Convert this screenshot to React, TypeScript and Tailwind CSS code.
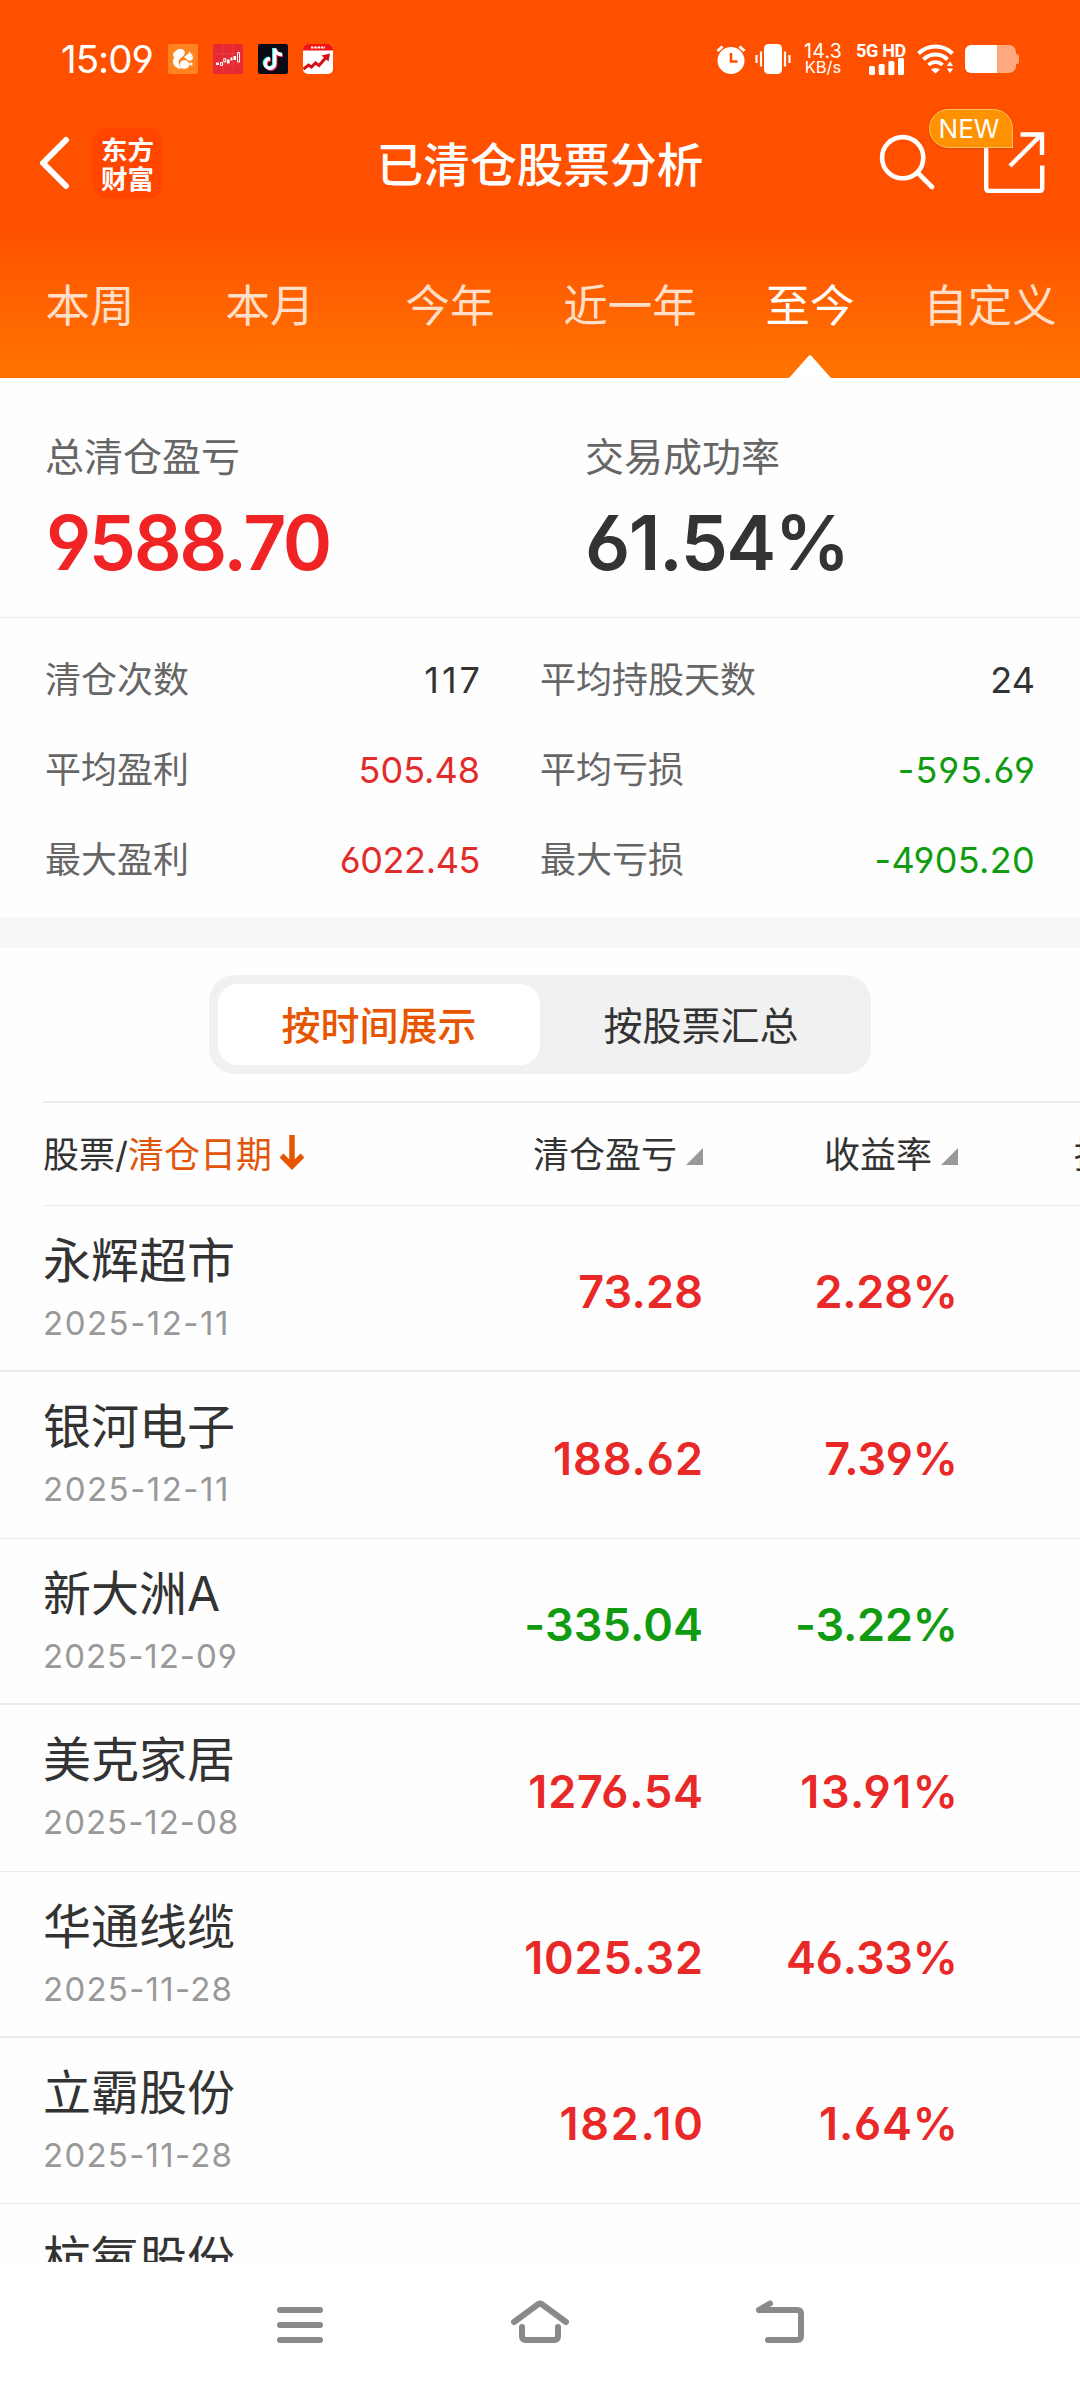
import { ReactNode } from "react";

interface Trade {
  name: string;
  date: string;
  profit: string;
  rate: string;
}

const tabs = ["本周", "本月", "今年", "近一年", "至今", "自定义"];
const activeTab = "至今";

const stats = [
  { label: "清仓次数", value: "117", style: "text-[#333] tracking-[3px] -mr-[3px]" },
  { label: "平均持股天数", value: "24", style: "text-[#333]" },
  { label: "平均盈利", value: "505.48", style: "text-[#e32b2b]" },
  { label: "平均亏损", value: "-595.69", style: "text-[#109b10] tracking-[1px] -mr-px" },
  { label: "最大盈利", value: "6022.45", style: "text-[#e32b2b] tracking-[-0.400px]" },
  { label: "最大亏损", value: "-4905.20", style: "text-[#109b10] tracking-[0.300px]" },
];

const trades: Trade[] = [
  { name: "永辉超市", date: "2025-12-11", profit: "73.28", rate: "2.28%" },
  { name: "银河电子", date: "2025-12-11", profit: "188.62", rate: "7.39%" },
  { name: "新大洲A", date: "2025-12-09", profit: "-335.04", rate: "-3.22%" },
  { name: "美克家居", date: "2025-12-08", profit: "1276.54", rate: "13.91%" },
  { name: "华通线缆", date: "2025-11-28", profit: "1025.32", rate: "46.33%" },
  { name: "立霸股份", date: "2025-11-28", profit: "182.10", rate: "1.64%" },
  { name: "杭氧股份", date: "", profit: "", rate: "" },
];

// The digit 1 is narrow in Inter, so spread strings that contain it
function spacing(text: string, base: number, perOne: number) {
  if (!text) return undefined;
  const ones = text.split("1").length - 1;
  const value = (base + perOne * ones) / text.length;
  return { letterSpacing: value, marginRight: -value };
}

function AppIcons() {
  return (
    <div className="flex gap-[15px] ml-[15px]">
      {/* UC */}
      <svg width="30" height="30" viewBox="0 0 30 30">
        <rect width="30" height="30" rx="2" fill="#ff8420" />
        <path
          d="M13.500 25C8 24.500 4.500 21 5 16.500c.3-2 1.500-3 1.500-3C4 12 5 8 8 7c1.500-2.500 6-2.500 8-.5 2 2.500 0 5-2 6.500-3 2-4 4-3 7 .4 2 1.500 3.500 2.500 5z"
          fill="#fff"
        />
        <path d="M16 13l4.500-3.500.5-2.500 2 2.500c1.500 1.500 2 3 2 5l-2.500 2.500-3-1z" fill="#fff" />
        <ellipse cx="16.500" cy="20.500" rx="4.800" ry="4.300" fill="#fff" />
        <circle cx="23" cy="20" r="1.600" fill="#fff" />
      </svg>
      {/* K-line app */}
      <svg width="30" height="30" viewBox="0 0 30 30">
        <rect width="30" height="30" rx="2" fill="#e62a33" />
        <path d="M0 10h30M0 20h30M10 0v30M20 0v30" stroke="#ee5a5f" strokeWidth="0.600" opacity="0.600" />
        <path d="M3 18.500h3v2.500H3zM14 15.500h2.500v4H14zM17.500 13.500h2v3h-2zM20.500 12h2.500v4h-2.500z" fill="#fff" />
        <path d="M7.500 18.500h2v3h-2zM10.800 14.500h2v3.500h-2zM24.500 8.500h2v9.500h-2z" fill="none" stroke="#fff" />
      </svg>
      {/* TikTok */}
      <svg width="30" height="30" viewBox="0 0 30 30">
        <rect width="30" height="30" rx="2" fill="#0b0b17" />
        <g fill="none" strokeWidth="3.400">
          <path d="M15.700 4v15a4.700 4.700 0 1 1-4.700-4.700M15.700 4c.5 3.500 3 6 7 6" stroke="#25f4ee" />
          <path d="M17.700 5.500v15a4.700 4.700 0 1 1-4.700-4.700M17.700 5.500c.5 3.500 3 6 7 6" stroke="#fe2c55" />
          <path d="M16.700 4.500v15a4.700 4.700 0 1 1-4.700-4.700M16.700 4.500c.5 3.500 3 6 7.500 6" stroke="#fff" />
        </g>
      </svg>
      {/* stock calendar */}
      <svg width="30" height="30" viewBox="0 0 30 30">
        <rect width="30" height="30" rx="5" fill="#fff" />
        <path d="M0 6.500V5a5 5 0 0 1 5-5h20a5 5 0 0 1 5 5v1.500z" fill="#f01414" />
        <path d="M8 3.500h14" stroke="#fff" strokeWidth="2" strokeDasharray="2.500 0.800" />
        <path d="M0.500 25l5-4 3 2 4-4 3.500 2.500 7-8" fill="none" stroke="#d40f17" strokeWidth="3" />
        <path d="M18.500 11.500L27 9.500l-1.500 8z" fill="#d40f17" />
      </svg>
    </div>
  );
}

function StatusBar() {
  return (
    <div className="flex items-center h-[118px] pl-[61px] pr-[61px] text-white">
      <span className="w-[92px] text-[38.500px] leading-none tracking-[-1px] whitespace-nowrap">15:09</span>
      <AppIcons />
      <div className="flex-1" />
      <svg width="30" height="30" viewBox="0 0 30 30">
        <path d="M1.500 7l5-4.500M28.500 7l-5-4.500" stroke="#fff" strokeWidth="3" />
        <circle cx="15" cy="16.500" r="13.500" fill="#fff" />
        <path d="M15 9v8.500h6.500" fill="none" stroke="#ff5000" strokeWidth="2.600" />
      </svg>
      <svg width="36" height="30" viewBox="0 0 36 30" className="ml-[9px]">
        <rect x="9" width="18" height="30" rx="4.500" fill="#fff" />
        <path d="M6 7.500v15M30 7.500v15M1.500 11v8M34.500 11v8" stroke="#fff" strokeWidth="2.200" />
      </svg>
      <div className="w-[38px] ml-[13px] text-center whitespace-nowrap">
        <div className="text-[19.500px] leading-[17px] tracking-[0.300px]">14.3</div>
        <div className="text-[16.500px] leading-[15px]">KB/s</div>
      </div>
      <div className="w-[50px] ml-[14px] flex flex-col items-end">
        <span className="font-[Roboto] text-[18px] leading-[15px] font-bold tracking-[-0.300px] whitespace-nowrap">5G HD</span>
        <svg width="36" height="17" viewBox="0 0 36 17" fill="#fff" className="mr-px">
          <rect x="0" y="8" width="6" height="9" rx="1.500" />
          <rect x="9.700" y="6" width="6" height="11" rx="1.500" />
          <rect x="19.400" y="3" width="6" height="14" rx="1.500" />
          <rect x="29" y="0" width="6" height="17" rx="1.500" />
        </svg>
      </div>
      <svg width="37" height="30" viewBox="0 0 37 30" className="ml-[11px]" fill="none" stroke="#fff" strokeWidth="4">
        <path d="M1.500 9.500a24 24 0 0 1 34 0" />
        <path d="M6.500 15.500a17 17 0 0 1 24 0" />
        <path d="M11.500 21a10 10 0 0 1 14 0" strokeWidth="3.600" />
        <path d="M14 25.500q4.500-3 9 0L18.500 29.500z" fill="#fff" stroke="none" />
        <path d="M29 22.500h8l-4-6zM29 24h8l-4 6z" fill="#fff" stroke="#ff5000" strokeWidth="1" />
      </svg>
      <svg width="54" height="28" viewBox="0 0 54 28" className="ml-[11px] -mr-[50px] shrink-0">
        <path d="M32 0h12a7 7 0 0 1 7 7v2h1a2 2 0 0 1 2 2v6a2 2 0 0 1-2 2h-1v2a7 7 0 0 1-7 7H32z" fill="#ffa880" />
        <path d="M32 0H6a6 6 0 0 0-6 6v16a6 6 0 0 0 6 6h26z" fill="#fff" />
      </svg>
      <div className="w-[50px]" />
    </div>
  );
}

function TitleBar() {
  return (
    <div className="grid grid-cols-[1fr_auto_1fr] items-center h-[90px] text-white">
      <div className="flex items-center pl-[38px]">
        <svg width="32" height="54" viewBox="0 0 32 54" fill="none" stroke="#fff" strokeWidth="6" strokeLinecap="round" strokeLinejoin="round">
          <path d="M28 4L5 27l23 23" />
        </svg>
        <div className="w-[71px] h-[71px] ml-[22px] rounded-[16px] bg-[#ff4500] flex items-center justify-center text-[26.500px] leading-[29px] font-bold">
          <div className="w-[53px] font-['Noto_Sans_CJK_SC',sans-serif]">东方财富</div>
        </div>
      </div>
      <h1 className="pt-[4px] text-[46.700px] leading-none font-medium">已清仓股票分析</h1>
      <div className="relative flex justify-end pr-[35px]">
        <svg width="56" height="56" viewBox="0 0 56 56" fill="none" stroke="#fff" strokeWidth="4.600" strokeLinecap="round" className="mr-[48px] mt-px">
          <circle cx="23.700" cy="23.700" r="20.600" />
          <path d="M39 39l14 14" />
        </svg>
        <svg width="62" height="62" viewBox="0 0 62 62" fill="none" stroke="#fff" strokeWidth="4.400" className="-mt-[2px]">
          <path d="M3.200 12v45q0 3 3 3h50q3 0 3-3V34.500" />
          <path d="M37.500 3.500h21.500v20.500M58 4L27 35" />
        </svg>
        <span className="absolute right-[67px] -top-[24px] w-[84px] h-[39px] rounded-full rounded-br-none border border-[#ffc060] bg-[#ff9200] flex items-center justify-center pr-[4px] pt-px text-[26px] leading-none shadow">
          NEW
        </span>
      </div>
    </div>
  );
}

function Tabs() {
  return (
    <div className="grid grid-cols-6 h-[170px]">
      {tabs.map((tab) => (
        <div
          key={tab}
          className={`relative flex justify-center pt-[75px] text-[44.500px] leading-[46px] whitespace-nowrap ${
            tab === activeTab ? "text-white" : "text-[#ffdfc9]"
          }`}
        >
          {tab}
          {tab === activeTab && (
            <svg width="42" height="23" viewBox="0 0 42 23" className="absolute bottom-0">
              <path d="M0 23L19.500 1q1.500-1.500 3 0L42 23z" fill="#fff" />
            </svg>
          )}
        </div>
      ))}
    </div>
  );
}

function Summary() {
  return (
    <section>
      <div className="grid grid-cols-2 h-[240px] border-b border-[#ebebeb] pt-[59px]">
        <div className="pl-[45px]">
          <div className="text-[39px] leading-[40px] text-[#666]">总清仓盈亏</div>
          <div className="mt-[26px] ml-px text-[75px] leading-[80px] font-[560] tracking-[-2.400px] text-[#f02424]">9588.70</div>
        </div>
        <div className="pl-[45px]">
          <div className="text-[39px] leading-[40px] text-[#666]">交易成功率</div>
          <div className="mt-[26px] text-[75px] leading-[80px] font-[560] tracking-[-1.500px] text-[#333]">61.54%</div>
        </div>
      </div>
      <div className="grid grid-cols-[435px_495px] content-start gap-x-[60px] pl-[45px] pt-[17px] h-[300px]">
        {stats.map((s) => (
          <div key={s.label} className="flex items-center justify-between h-[90px] text-[36px]">
            <span className="text-[#666]">{s.label}</span>
            <span className={s.style}>{s.value}</span>
          </div>
        ))}
      </div>
    </section>
  );
}

function SortMark() {
  return (
    <svg width="17" height="17" viewBox="0 0 17 17" className="ml-[9px] mt-[3px]">
      <path d="M17 0v17H0z" fill="#999" />
    </svg>
  );
}

function HeadCell({ className, children }: { className: string; children: ReactNode }) {
  return (
    <div className={`flex items-center justify-end shrink-0 ${className}`}>
      {children}
      <SortMark />
    </div>
  );
}

function TradeRow({ trade, thick }: { trade: Trade; thick: boolean }) {
  const color = trade.profit.startsWith("-") ? "text-[#109b10]" : "text-[#e92828]";

  return (
    <div className={`flex h-[166.400px] shrink-0 pl-[43px] border-[#ececec] ${thick ? "border-b-2" : "border-b"}`}>
      <div className="w-[300px] pt-[30px]">
        <div className="text-[48px] leading-[50px] text-[#333]">{trade.name}</div>
        <div className="mt-[17px] text-[33px] leading-[40px] text-[#999]" style={spacing(trade.date, 7.5, 2.5)}>
          {trade.date}
        </div>
      </div>
      <div className={`w-[360px] flex items-center justify-end pt-[7px] text-[45px] font-[560] ${color}`}>
        <span style={spacing(trade.profit, 1, 4.7)}>{trade.profit}</span>
      </div>
      <div className={`w-[255px] flex items-center justify-end pt-[7px] text-[45px] font-[560] ${color}`}>
        <span style={spacing(trade.rate, -1, 5)}>{trade.rate}</span>
      </div>
    </div>
  );
}

function NavBar() {
  return (
    <nav className="h-[126px] shrink-0 flex justify-center gap-[184px] pt-[36px] bg-white">
      <svg width="52" height="50" viewBox="0 0 52 50" stroke="#8a8a8a" strokeWidth="6" strokeLinecap="round">
        <path d="M6 12h40M6 27h40M6 42h40" />
      </svg>
      <svg width="60" height="50" viewBox="0 0 60 50" fill="none" stroke="#8a8a8a" strokeWidth="6" strokeLinecap="round" strokeLinejoin="round">
        <path d="M4 24L28.500 6q1.500-1 3 0L56 24M12 29v9q0 4 4 4h28q4 0 4-4v-9" />
      </svg>
      <svg width="52" height="50" viewBox="0 0 52 50" fill="none" stroke="#8a8a8a" strokeWidth="6" strokeLinecap="round" strokeLinejoin="round">
        <path d="M5 12h38q4 0 4 4v22q0 4-4 4H14M5 12l11-6.500" />
      </svg>
    </nav>
  );
}

export default function App() {
  return (
    <div className="w-[1080px] h-[2388px] flex flex-col overflow-hidden bg-[#fefefe] font-[Inter,'Noto_Sans_CJK_SC',sans-serif] [font-feature-settings:'cv03','cv04','ss03']">
      <header className="shrink-0 bg-linear-to-b from-[#ff5000] from-[60%] to-[#ff7300]">
        <StatusBar />
        <TitleBar />
        <Tabs />
      </header>

      <main className="flex-1 min-h-0 flex flex-col overflow-hidden">
        <Summary />
        <div className="h-[30px] shrink-0 bg-[#f7f7f7]" />

        <div className="shrink-0 flex justify-center pt-[27px] pb-[27px]">
          <div className="flex w-[662px] h-[99px] p-[9px] rounded-[26px] bg-[#f1f1f1] text-[39px]">
            <div className="flex-1 flex items-center justify-center pt-[4px] rounded-[20px] bg-white text-[#e85500] font-medium">按时间展示</div>
            <div className="flex-1 flex items-center justify-center pt-[4px] text-[#333]">按股票汇总</div>
          </div>
        </div>

        <div className="ml-[43px] h-[105px] pt-[2px] shrink-0 flex border-t-2 border-b border-[#ececec] text-[36px] text-[#333] whitespace-nowrap overflow-hidden">
          <div className="w-[300px] shrink-0 flex items-center">
            股票/<span className="text-[#e2560c]">清仓日期</span>
            <svg width="26" height="36" viewBox="0 0 26 36" fill="none" stroke="#e85500" strokeWidth="5.500" className="ml-[7px] -mt-[4px]">
              <path d="M13 0v30M2.500 20.500L13 31l10.500-10.500" />
            </svg>
          </div>
          <HeadCell className="w-[360px]">清仓盈亏</HeadCell>
          <HeadCell className="w-[255px]">收益率</HeadCell>
          <div className="w-[255px] shrink-0 flex items-center pl-[116px]">持股天数</div>
        </div>

        {trades.map((trade, i) => (
          <TradeRow key={trade.name} trade={trade} thick={i % 2 === 0} />
        ))}
      </main>

      <NavBar />
    </div>
  );
}
